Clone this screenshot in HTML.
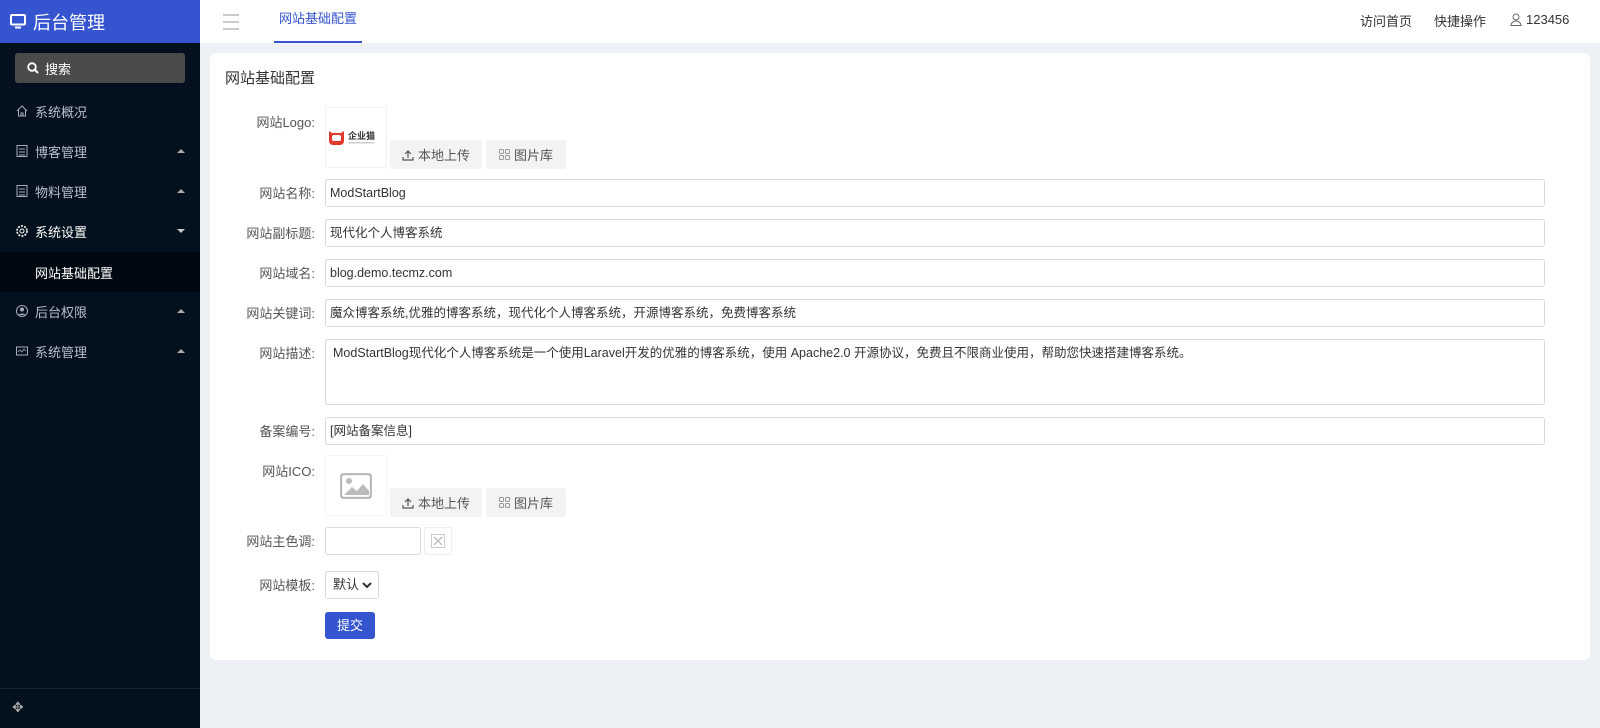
<!DOCTYPE html>
<html><head><meta charset="utf-8"><style>
*{box-sizing:border-box;margin:0;padding:0}
body{width:1600px;height:728px;overflow:hidden;background:#edf0f4;font-family:"Liberation Sans","Noto Sans CJK SC",sans-serif;font-size:13px;color:#333;position:relative}
.side{position:absolute;left:0;top:0;width:200px;height:728px;background:#03101d}
.brand{height:43px;background:#3555d0;color:#fff;font-size:18px;display:flex;align-items:center;padding-left:10px}
.search{position:absolute;left:15px;top:53px;width:170px;height:30px;background:#4a4a4a;border-radius:3px;color:#fff;font-size:13px;display:flex;align-items:center;padding-left:12px}
.item{position:absolute;left:0;width:200px;height:40px;display:flex;align-items:center;padding-left:15px;color:#b8bfc8;font-size:13px}
.item svg{margin-right:6px}
.item .arr{position:absolute;right:15px;top:18px;width:0;height:0;border-left:4px solid transparent;border-right:4px solid transparent;border-bottom:4px solid #aaa}
.item .arr.d{border-bottom:0;border-top:4px solid #ccc}
.top{position:absolute;left:200px;top:0;right:0;height:43px;background:#fff}
.card{position:absolute;left:210px;top:53px;width:1380px;height:607px;background:#fff;border-radius:6px}
.lab{position:absolute;width:110px;text-align:right;color:#555;font-size:13px}
.inp{position:absolute;left:325px;width:1220px;height:28px;border:1px solid #d9d9d9;border-radius:3px;padding-left:4px;line-height:26px;font-size:12.5px;color:#333}
.btn{position:absolute;height:29px;background:#f3f3f3;color:#555;font-size:13px;display:flex;align-items:center;justify-content:center;border-radius:2px}
.btn svg{margin-right:4px}
</style></head><body>
<div class="side">
<div class="brand"><svg width="16" height="15" viewBox="0 0 16 15"><rect x="1" y="1" width="14" height="9.5" rx="1" fill="none" stroke="#fff" stroke-width="2"/><rect x="5" y="12.5" width="6" height="2" fill="#fff"/></svg><span style="margin-left:7px">后台管理</span></div>
<div class="search"><svg width="12" height="12" viewBox="0 0 12 12"><circle cx="5" cy="5" r="3.8" fill="none" stroke="#fff" stroke-width="1.8"/><path d="M8 8l3 3" stroke="#fff" stroke-width="2"/></svg><span style="margin-left:6px">搜索</span></div>
<div class="item" style="top:91px"><svg width="14" height="14" viewBox="0 0 14 14"><path d="M2 7L7 2l5 5M3.5 6v6h7V6M6 12V9h2v3" fill="none" stroke="#aab" stroke-width="1"/></svg>系统概况</div>
<div class="item" style="top:131px"><svg width="14" height="14" viewBox="0 0 14 14"><rect x="2" y="1.5" width="10" height="11" fill="none" stroke="#aab"/><path d="M4 5h6M4 8h6M4 11h6" stroke="#aab"/></svg>博客管理<i class="arr"></i></div>
<div class="item" style="top:171px"><svg width="14" height="14" viewBox="0 0 14 14"><rect x="2" y="1.5" width="10" height="11" fill="none" stroke="#aab"/><path d="M4 5h6M4 8h6M4 11h6" stroke="#aab"/></svg>物料管理<i class="arr"></i></div>
<div class="item" style="top:211px;color:#fff"><svg width="14" height="14" viewBox="0 0 14 14"><circle cx="7" cy="7" r="2" fill="none" stroke="#fff"/><circle cx="7" cy="7" r="5" fill="none" stroke="#fff" stroke-dasharray="2 1.2" stroke-width="1.6"/></svg>系统设置<i class="arr d"></i></div>
<div class="item" style="top:252px;background:#000811;color:#fff;padding-left:35px">网站基础配置</div>
<div class="item" style="top:291px"><svg width="14" height="14" viewBox="0 0 14 14"><circle cx="7" cy="7" r="5.5" fill="none" stroke="#aab"/><circle cx="7" cy="5.5" r="2" fill="#aab"/><path d="M3.5 11a4 3 0 0 1 7 0" fill="#aab"/></svg>后台权限<i class="arr"></i></div>
<div class="item" style="top:331px"><svg width="14" height="14" viewBox="0 0 14 14"><rect x="1.5" y="3" width="11" height="8" fill="none" stroke="#aab"/><path d="M3 8l2-2 2 2 2-3 2 2" fill="none" stroke="#aab" stroke-width=".8"/></svg>系统管理<i class="arr"></i></div>
<div style="position:absolute;left:0;top:688px;width:200px;border-top:1px solid #1a2532"></div>
<div style="position:absolute;left:12px;top:699px;color:#aaa;font-size:14px">✥</div>
</div>
<div class="top">
<div style="position:absolute;left:23px;top:14px;width:16px"><div style="height:2px;background:#ccc;margin-bottom:5px"></div><div style="height:2px;background:#ccc;margin-bottom:5px"></div><div style="height:2px;background:#ccc"></div></div>
<div style="position:absolute;left:74px;top:0;width:88px;height:43px;border-bottom:2px solid #3555d0;color:#3555d0;text-align:center;line-height:38px;font-size:13px">网站基础配置</div>
<div style="position:absolute;left:1160px;top:11px;font-size:13px;color:#333">访问首页</div>
<div style="position:absolute;left:1234px;top:11px;font-size:13px;color:#333">快捷操作</div>
<div style="position:absolute;left:1310px;top:11px;font-size:13px;color:#333;display:flex;align-items:center;line-height:17px"><svg width="12" height="13" viewBox="0 0 12 13" style="margin-right:4px"><circle cx="6" cy="4" r="3" fill="none" stroke="#666"/><path d="M1 12.5a5 4.5 0 0 1 10 0z" fill="none" stroke="#666"/></svg>123456</div>
</div>
<div class="card">
<div style="position:absolute;left:15px;top:14px;font-size:15px;color:#333">网站基础配置</div>
</div>
<div class="lab" style="left:205px;top:112px">网站Logo:</div>
<div style="position:absolute;left:325px;top:107px;width:62px;height:61px;border:1px solid #f2f2f2;display:flex;align-items:center;justify-content:center"><svg width="58" height="20" viewBox="0 0 58 20"><path d="M2 3l3 2h9l3-2v10a4 4 0 0 1-4 4H6a4 4 0 0 1-4-4z" fill="#e03a2f"/><rect x="5" y="7" width="9" height="6" rx="2" fill="#fff"/><text x="21" y="11" font-size="9" font-weight="bold" fill="#333" font-family="Noto Sans CJK SC">企业猫</text><rect x="21" y="14" width="26" height="1.5" fill="#ccc"/></svg></div>
<div class="btn" style="left:390px;top:140px;width:92px"><svg width="12" height="12" viewBox="0 0 12 12"><path d="M6 9V2M3 5l3-3 3 3M1 8v3h10V8" fill="none" stroke="#555" stroke-width="1.2"/></svg>本地上传</div>
<div class="btn" style="left:486px;top:140px;width:80px"><svg width="11" height="11" viewBox="0 0 11 11"><rect x=".5" y=".5" width="4" height="4" rx="1" fill="none" stroke="#999"/><rect x="6.5" y=".5" width="4" height="4" rx="1" fill="none" stroke="#999"/><rect x=".5" y="6.5" width="4" height="4" rx="1" fill="none" stroke="#999"/><rect x="6.5" y="6.5" width="4" height="4" rx="1" fill="none" stroke="#999"/></svg>图片库</div>
<div class="lab" style="left:205px;top:183px">网站名称:</div><div class="inp" style="top:179px">ModStartBlog</div>
<div class="lab" style="left:205px;top:223px">网站副标题:</div><div class="inp" style="top:219px">现代化个人博客系统</div>
<div class="lab" style="left:205px;top:263px">网站域名:</div><div class="inp" style="top:259px">blog.demo.tecmz.com</div>
<div class="lab" style="left:205px;top:303px">网站关键词:</div><div class="inp" style="top:299px">魔众博客系统,优雅的博客系统，现代化个人博客系统，开源博客系统，免费博客系统</div>
<div class="lab" style="left:205px;top:343px">网站描述:</div><div class="inp" style="top:339px;height:66px;padding:4px 7px;line-height:18px">ModStartBlog现代化个人博客系统是一个使用Laravel开发的优雅的博客系统，使用 Apache2.0 开源协议，免费且不限商业使用，帮助您快速搭建博客系统。</div>
<div class="lab" style="left:205px;top:421px">备案编号:</div><div class="inp" style="top:417px">[网站备案信息]</div>
<div class="lab" style="left:205px;top:461px">网站ICO:</div>
<div style="position:absolute;left:325px;top:455px;width:62px;height:61px;border:1px solid #f5f5f5;display:flex;align-items:center;justify-content:center"><svg width="32" height="26" viewBox="0 0 32 26"><rect x="1" y="1" width="30" height="24" rx="3" fill="none" stroke="#bbb" stroke-width="2.5"/><circle cx="9" cy="8" r="3" fill="#bbb"/><path d="M4 22l8-8 5 4 6-7 6 7v4z" fill="#bbb"/></svg></div>
<div class="btn" style="left:390px;top:488px;width:92px"><svg width="12" height="12" viewBox="0 0 12 12"><path d="M6 9V2M3 5l3-3 3 3M1 8v3h10V8" fill="none" stroke="#555" stroke-width="1.2"/></svg>本地上传</div>
<div class="btn" style="left:486px;top:488px;width:80px"><svg width="11" height="11" viewBox="0 0 11 11"><rect x=".5" y=".5" width="4" height="4" rx="1" fill="none" stroke="#999"/><rect x="6.5" y=".5" width="4" height="4" rx="1" fill="none" stroke="#999"/><rect x=".5" y="6.5" width="4" height="4" rx="1" fill="none" stroke="#999"/><rect x="6.5" y="6.5" width="4" height="4" rx="1" fill="none" stroke="#999"/></svg>图片库</div>
<div class="lab" style="left:205px;top:531px">网站主色调:</div>
<div style="position:absolute;left:325px;top:527px;width:96px;height:28px;border:1px solid #d9d9d9;border-radius:3px"></div>
<div style="position:absolute;left:424px;top:527px;width:28px;height:28px;border:1px solid #eee;border-radius:2px;display:flex;align-items:center;justify-content:center"><svg width="14" height="14" viewBox="0 0 14 14"><rect x=".5" y=".5" width="13" height="13" fill="none" stroke="#ccc"/><path d="M3 3l8 8M11 3l-8 8" stroke="#aaa"/></svg></div>
<div class="lab" style="left:205px;top:575px">网站模板:</div>
<div style="position:absolute;left:325px;top:571px;width:54px;height:28px;border:1px solid #d9d9d9;border-radius:3px;padding-left:7px;line-height:26px;font-size:13px">默认<svg width="10" height="7" viewBox="0 0 10 7" style="position:absolute;right:6px;top:10px"><path d="M1 1l4 4 4-4" fill="none" stroke="#333" stroke-width="2"/></svg></div>
<div style="position:absolute;left:325px;top:612px;width:50px;height:27px;background:#3555d0;border-radius:3px;color:#fff;text-align:center;line-height:27px;font-size:13px">提交</div>
</body></html>
